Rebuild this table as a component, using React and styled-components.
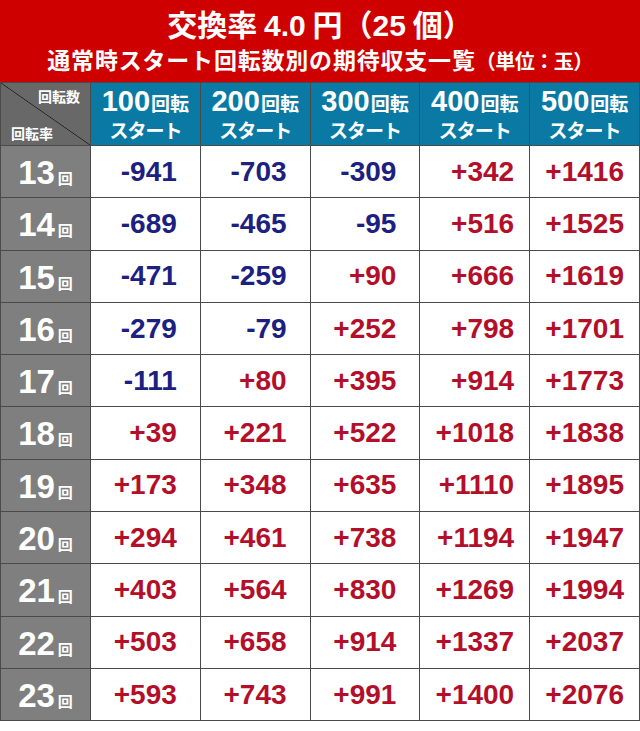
import React from "react";
import styled, { createGlobalStyle } from "styled-components";

const GlobalStyle = createGlobalStyle`
  body {
    margin: 0;
    background: #fff;
  }
`;

const rows = [
  [13, -941, -703, -309, 342, 1416],
  [14, -689, -465, -95, 516, 1525],
  [15, -471, -259, 90, 666, 1619],
  [16, -279, -79, 252, 798, 1701],
  [17, -111, 80, 395, 914, 1773],
  [18, 39, 221, 522, 1018, 1838],
  [19, 173, 348, 635, 1110, 1895],
  [20, 294, 461, 738, 1194, 1947],
  [21, 403, 564, 830, 1269, 1994],
  [22, 503, 658, 914, 1337, 2037],
  [23, 593, 743, 991, 1400, 2076],
];

const starts = [100, 200, 300, 400, 500];

const fmt = (n) => (n > 0 ? `+${n}` : `${n}`);

const App = () => {
  return (
    <Wrap>
      <GlobalStyle />
      <Title>
        <Main>
          交換率 <Num>4.0</Num> 円（<Num>25</Num> 個）
        </Main>
        <Sub>
          通常時スタート回転数別の期待収支一覧<Unit>（単位：玉）</Unit>
        </Sub>
      </Title>

      <Table>
        <Corner>
          <CornerTop>回転数</CornerTop>
          <CornerBottom>回転率</CornerBottom>
        </Corner>
        {starts.map((s) => (
          <HeadCell key={s}>
            <HeadTop>
              <Num>{s}</Num>
              <small>回転</small>
            </HeadTop>
            <HeadBottom>スタート</HeadBottom>
          </HeadCell>
        ))}

        {rows.map(([rate, ...vals]) => (
          <React.Fragment key={rate}>
            <RateCell>
              <RateNum>{rate}</RateNum>
              <RateUnit>回</RateUnit>
            </RateCell>
            {vals.map((v, i) => (
              <ValueCell key={i} plus={v > 0} pad={i < 3 ? 23 : 15}>
                {fmt(v)}
              </ValueCell>
            ))}
          </React.Fragment>
        ))}
      </Table>
    </Wrap>
  );
};

const Wrap = styled.div`
  width: 640px;
  font-family: "Liberation Sans", "Noto Sans CJK JP", sans-serif;
  font-weight: bold;
`;

const Title = styled.div`
  height: 82px;
  background-color: #cf0000;
  color: #fff;
  display: flex;
  flex-direction: column;
  align-items: center;
  justify-content: center;
  font-family: "Noto Sans CJK JP", sans-serif;
  font-weight: bold;
`;

const Main = styled.div`
  font-size: 30px;
  line-height: 36px;
  margin-top: -2px;
`;

const Num = styled.span`
  font-family: "Liberation Sans", sans-serif;
  font-weight: bold;
`;

const Sub = styled.div`
  font-size: 23px;
  line-height: 30px;
  letter-spacing: 0.8px;
`;

const Unit = styled.span`
  font-size: 20px;
  letter-spacing: -0.5px;
`;

const Table = styled.div`
  display: grid;
  grid-template-columns: 89px repeat(5, 1fr);
  grid-template-rows: 62px repeat(11, 51.3px);
  gap: 1px;
  border: 1px solid #4a4a4a;
  background-color: #4a4a4a;
`;

const Corner = styled.div`
  background: linear-gradient(
      to top right,
      transparent calc(50% - 0.7px),
      #1e1e1e 50%,
      transparent calc(50% + 0.7px)
    ),
    #686868;
  display: flex;
  flex-direction: column;
  justify-content: space-between;
  padding: 4px 10px 3px 10px;
  color: #fff;
  font-family: "Noto Sans CJK JP", sans-serif;
  font-size: 14px;
  line-height: 18px;
`;

const CornerTop = styled.div`
  align-self: flex-end;
`;

const CornerBottom = styled.div`
  align-self: flex-start;
`;

const HeadCell = styled.div`
  background-color: #0a7aa5;
  color: #fff;
  display: flex;
  flex-direction: column;
  align-items: center;
  justify-content: center;
`;

const HeadTop = styled.div`
  font-size: 29px;
  line-height: 30px;
  display: flex;
  align-items: baseline;

  small {
    font-family: "Noto Sans CJK JP", sans-serif;
    font-size: 19px;
    margin-left: 1px;
  }
`;

const HeadBottom = styled.div`
  font-family: "Noto Sans CJK JP", sans-serif;
  font-size: 19px;
  line-height: 24px;
  letter-spacing: -1px;
`;

const RateCell = styled.div`
  background-color: #7f7f7f;
  color: #fff;
  display: flex;
  align-items: baseline;
  justify-content: center;
  padding-top: 10px;
`;

const RateNum = styled.span`
  font-size: 33px;
  line-height: 34px;
`;

const RateUnit = styled.span`
  font-family: "Noto Sans CJK JP", sans-serif;
  font-size: 15px;
  margin-left: 3px;
`;

const ValueCell = styled.div`
  background-color: #fff;
  color: ${(props) => (props.plus ? "#b40f2a" : "#1c2080")};
  font-size: 28px;
  display: flex;
  align-items: center;
  justify-content: flex-end;
  padding-right: ${(props) => props.pad}px;
`;

export default App;
